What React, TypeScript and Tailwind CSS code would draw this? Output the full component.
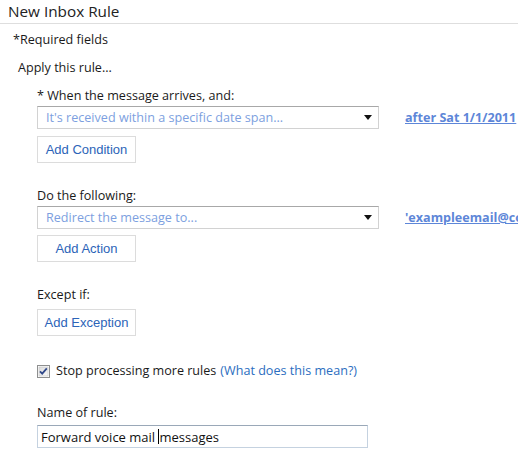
import React from "react";

function Select({ text }: { text: string }) {
  return (
    <div className="flex h-[23px] w-[342px] shrink-0 items-center justify-between border border-[#d2d2d2] border-t-[#a8a8a8] pl-[8px] pr-[6px] text-[#7d9fe0]">
      <span className="truncate">{text}</span>
      <svg width="8" height="5" viewBox="0 0 8 5" className="shrink-0">
        <path d="M0 0H8L4 5Z" fill="#111" />
      </svg>
    </div>
  );
}

function Btn({ label }: { label: string }) {
  return (
    <div className="flex h-[27px] w-[99px] items-center justify-center border border-[#dcdcdc] font-['Liberation_Sans',sans-serif] text-[13px] text-[#2c64b8]">
      {label}
    </div>
  );
}

export default function App() {
  return (
    <div className="h-[458px] w-[518px] overflow-hidden bg-white font-['Open_Sans',sans-serif] text-[12.6px] leading-[18px] text-[#1a1a1a]">
      <div className="h-[24px] border-b border-[#dedede] pl-[8px] text-[15.3px] leading-[22px] text-[#222]">
        New Inbox Rule
      </div>
      <div className="flex flex-col">
        <div className="mt-[7px] pl-[13px]">*Required fields</div>
        <div className="mt-[10px] pl-[18px]">Apply this rule...</div>
        <div className="flex flex-col pl-[37px]">
          <div className="mt-[10px]">* When the message arrives, and:</div>
          <div className="mt-[1px] flex items-center overflow-hidden">
            <Select text="It's received within a specific date span..." />
            <a className="ml-[26px] whitespace-nowrap font-bold text-[#5d86d8] underline">
              after Sat 1/1/2011
            </a>
          </div>
          <div className="mt-[7px]">
            <Btn label="Add Condition" />
          </div>
          <div className="mt-[24px]">Do the following:</div>
          <div className="mt-[1px] flex items-center overflow-hidden">
            <Select text="Redirect the message to..." />
            <a className="ml-[26px] whitespace-nowrap font-bold text-[#5d86d8] underline">
              'exampleemail@contoso.com'
            </a>
          </div>
          <div className="mt-[6px]">
            <Btn label="Add Action" />
          </div>
          <div className="mt-[24px]">Except if:</div>
          <div className="mt-[5px]">
            <Btn label="Add Exception" />
          </div>
          <div className="mt-[26px] flex items-center">
            <svg width="13" height="13" viewBox="0 0 13 13" className="shrink-0">
              <defs>
                <linearGradient id="cb" x1="0" y1="0" x2="1" y2="1">
                  <stop offset="0" stopColor="#dcdcdc" />
                  <stop offset="1" stopColor="#fafafa" />
                </linearGradient>
              </defs>
              <rect x="0.5" y="0.5" width="12" height="12" fill="#fff" stroke="#8e8f8f" />
              <rect x="2" y="2" width="9" height="9" fill="url(#cb)" stroke="#c4c4c4" strokeWidth="0.6" />
              <path d="M3 6.3L5.2 8.6L9.8 3.4" fill="none" stroke="#31498a" strokeWidth="1.8" />
            </svg>
            <span className="ml-[6px]">Stop processing more rules</span>
            <span className="ml-[4px] text-[#2b6dc0]">(What does this mean?)</span>
          </div>
          <div className="mt-[24px]">Name of rule:</div>
          <div className="mt-[3px] flex h-[23px] w-[331px] items-center border border-[#c5d2e0] border-t-[#9aa8b8] pl-[3px] text-[13px] text-[#111]">
            <span className="whitespace-pre">Forward voice mail </span>
            <span className="h-[15px] w-px bg-black" />
            <span className="whitespace-pre">messages</span>
          </div>
        </div>
      </div>
    </div>
  );
}
